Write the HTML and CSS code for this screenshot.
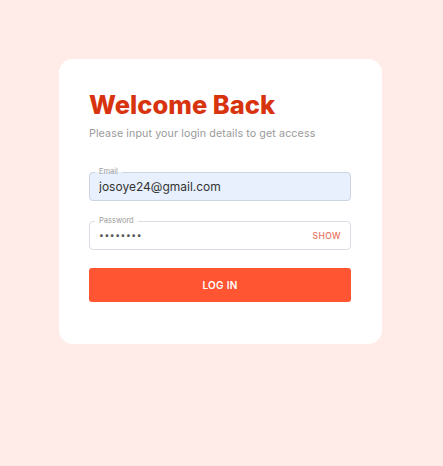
FILE: index.html
```html
<!DOCTYPE html>
<html lang="en">
<head>
<meta charset="utf-8">
<title>Login</title>
<link rel="stylesheet" href="styles.css">
</head>
<body>
<main class="page">
  <form class="card">
    <h1 class="title">Welcome Back</h1>
    <p class="subtitle">Please input your login details to get access</p>
    <fieldset class="field field-filled">
      <legend class="field-label">Email</legend>
      <input class="field-input" type="email" value="josoye24@gmail.com">
    </fieldset>
    <fieldset class="field field-password">
      <legend class="field-label">Password</legend>
      <div class="field-row">
        <input class="field-input field-secret" type="password" value="password">
        <button class="show-btn" type="button">SHOW</button>
      </div>
    </fieldset>
    <button class="submit" type="button">LOG IN</button>
  </form>
</main>
</body>
</html>
```
FILE: styles.css
```css
html, body {
  margin: 0;
  padding: 0;
}
body {
  background: #ffece8;
  font-family: Inter, "Open Sans", "Liberation Sans", sans-serif;
  min-height: 100vh;
}
.page {
  display: flex;
  justify-content: center;
  padding: 59px 2px 0 0;
}
.card {
  width: 323px;
  box-sizing: border-box;
  background: #ffffff;
  border-radius: 14px;
  padding: 31px 31px 42px 30px;
  display: flex;
  flex-direction: column;
}
.title {
  margin: 0;
  font-size: 25.5px;
  line-height: 30px;
  font-weight: 800;
  color: #d8330f;
}
.subtitle {
  margin: 6px 0 0;
  font-size: 10.7px;
  line-height: 16px;
  color: #9a9a9a;
  letter-spacing: 0.1px;
}
.field {
  margin: 25px 0 0;
  padding: 0 9px 0 5px;
  border: 1px solid #d9dde5;
  border-radius: 4px;
  min-width: 0;
}
.field-filled {
  background: #e8f0fe;
  border-color: #cdd5e2;
}
.field-password {
  margin-top: 15px;
}
.field-label {
  padding: 0 4px;
  font-size: 7.5px;
  line-height: 10px;
  color: #9b9b9b;
}
.field-row {
  display: flex;
  align-items: center;
}
.field-input {
  display: block;
  width: 100%;
  box-sizing: border-box;
  height: 22px;
  margin: 0 0 1px;
  padding: 0 0 4px 4px;
  border: none;
  background: transparent;
  font-family: inherit;
  font-size: 12px;
  color: #333333;
  outline: none;
}
.field-secret {
  flex: 1;
  font-size: 8.5px;
  letter-spacing: 0.6px;
  color: #555555;
}
.show-btn {
  border: none;
  background: none;
  padding: 0 0 4px;
  font-family: inherit;
  font-size: 8.5px;
  font-weight: 500;
  letter-spacing: 0.4px;
  color: #e8735f;
}
.submit {
  margin-top: 18px;
  height: 34px;
  border: none;
  border-radius: 3px;
  background: #ff5532;
  color: #ffffff;
  font-family: inherit;
  font-size: 10px;
  font-weight: 600;
  letter-spacing: 0.3px;
}
```
